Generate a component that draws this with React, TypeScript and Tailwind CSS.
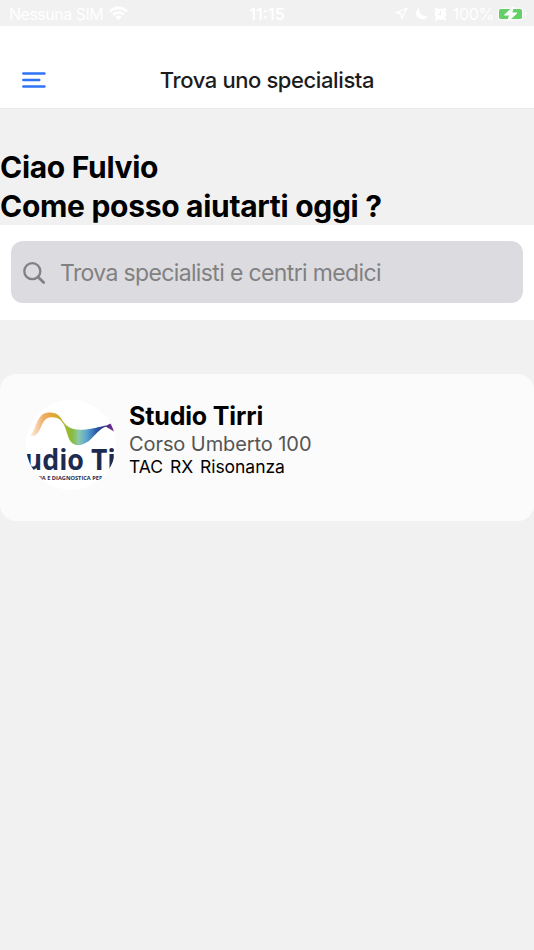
import React from 'react';

interface Clinic {
  name: string;
  address: string;
  services: string[];
}

const clinics: Clinic[] = [
  { name: 'Studio Tirri', address: 'Corso Umberto 100', services: ['TAC', 'RX', 'Risonanza'] },
];

const StatusBar: React.FC = () => (
  <div className="grid h-[26px] grid-cols-3 items-center px-[9px] pt-px text-[16px] leading-none text-white">
    <div className="flex items-center gap-[6px]">
      <span className="whitespace-nowrap tracking-[-0.5px]">Nessuna SIM</span>
      <svg width="19" height="15" viewBox="0 0 20 15" className="shrink-0" fill="none" stroke="white" strokeWidth="2.7">
        <path d="M1 5.2a13 13 0 0 1 18 0" />
        <path d="M4.4 8.8a8 8 0 0 1 11.2 0" />
        <path d="M10 14.4 6.8 11.2a4.6 4.6 0 0 1 6.4 0Z" fill="white" stroke="none" />
      </svg>
    </div>
    <span className="text-center font-semibold">11:15</span>
    <div className="flex items-center justify-end">
      <svg width="13" height="13" viewBox="0 0 13 13" className="mr-[7px] shrink-0" fill="none" stroke="white" strokeWidth="1.3" strokeLinejoin="round">
        <path d="M12 1 1 5.8l5.1.7.6 5.3Z" />
      </svg>
      <svg width="13" height="13" viewBox="0 0 13 13" className="mr-[6px] shrink-0" fill="white">
        <path d="M4.2.5A6.3 6.3 0 1 0 12.8 9C8 10.6 2.6 5.4 4.2.5Z" />
      </svg>
      <svg width="13" height="14" viewBox="0 0 13 14" className="mr-[6px] shrink-0">
        <circle cx="6.5" cy="7.3" r="5.7" fill="white" />
        <path d="M1.4 2.8 3 1.5M11.6 2.8 10 1.5M2.6 11.8l-.6.8M10.4 11.8l.6.8" stroke="white" strokeWidth="2" strokeLinecap="round" />
        <path d="M6.5 4.2v3.3H4.2" stroke="#ededed" fill="none" />
      </svg>
      <span className="mr-[3px] tracking-[-0.3px]">100%</span>
      <svg width="31" height="14" viewBox="0 0 31 14" className="-mr-[3px] shrink-0">
        <rect x=".5" y=".5" width="26" height="13" rx="3.5" fill="#f8f8f8" />
        <rect x="2" y="2" width="23" height="10" rx="1.8" fill="#65d067" />
        <path d="M28 4.8c2 .7 2 3.7 0 4.4Z" fill="white" />
        <path d="M16.5-.5 7.5 8h5L10.8 14.5 20 6h-5.2Z" fill="white" stroke="white" />
      </svg>
    </div>
  </div>
);

const Header: React.FC = () => (
  <header className="grid h-[83px] grid-cols-[1fr_auto_1fr] items-center border-b border-[#ebebec] bg-white px-[22px] pt-[25px]">
    <button type="button" aria-label="Menu">
      <svg width="24" height="18" viewBox="0 0 24 18" stroke="#2f73f6" strokeWidth="2.4" strokeLinecap="round">
        <path d="M1.3 2.5h21.2M1.3 9h16M1.3 15.5h21.2" />
      </svg>
    </button>
    <h1 className="text-[22px] font-medium leading-7 tracking-[-0.4px] text-[#1c1c1e]">Trova uno specialista</h1>
  </header>
);

const SearchBar: React.FC = () => (
  <div className="h-[95px] bg-white px-[11px] pt-4">
    <div className="flex h-[62px] items-center rounded-[12px] bg-[#dcdbe0] pl-[12px] pt-[2px] text-[#818181]">
      <svg width="22" height="22" viewBox="0 0 22 22" fill="none" stroke="currentColor" strokeWidth="2.3">
        <circle cx="9.3" cy="9.2" r="8" />
        <path d="m15 15 5.7 5.5" strokeWidth="2.7" strokeLinecap="round" />
      </svg>
      <span className="ml-[15px] text-[23px] tracking-[-0.64px]">Trova specialisti e centri medici</span>
    </div>
  </div>
);

const StudioLogo: React.FC = () => (
  <svg width="90" height="90" viewBox="0 0 90 90" className="shrink-0 rounded-full bg-white">
    <defs>
      <linearGradient id="wave" x1="6" y1="0" x2="88" y2="0" gradientUnits="userSpaceOnUse">
        <stop offset="0" stopColor="#fce8d8" />
        <stop offset="0.14" stopColor="#efae68" />
        <stop offset="0.25" stopColor="#e5a637" />
        <stop offset="0.38" stopColor="#b2b52d" />
        <stop offset="0.49" stopColor="#86bd3b" />
        <stop offset="0.57" stopColor="#8dc8ad" />
        <stop offset="0.67" stopColor="#58a4d0" />
        <stop offset="0.78" stopColor="#295bac" />
        <stop offset="0.88" stopColor="#343184" />
        <stop offset="1" stopColor="#7e2b8f" />
      </linearGradient>
      <clipPath id="bounds">
        <rect width="88" height="90" />
      </clipPath>
    </defs>
    <path
      d="M4.5 36C9 30 11 17 18 13.6C22 12 29 11.6 33 15.8C36 19 37 22 40 25C45 29.5 52 30.5 60 29.5C69 28.5 76 26 80.5 25.5L88 21.7V31.5L80 26.8C75 28 71 33 66 38C61 43.5 55 45.8 50 45C43 43 42 36 40 30C38 23.5 35 19.5 31 18C27 17 22 16.5 19 20C15 24 13.5 35.5 7 36Z"
      fill="url(#wave)"
    />
    <g fill="#1d2b51" fontFamily="Open Sans, sans-serif" fontWeight="700" clipPath="url(#bounds)">
      <text x="-1.5" y="69.8" fontSize="28.5" textLength="59.5" lengthAdjust="spacingAndGlyphs">udio</text>
      <text x="65" y="69.8" fontSize="28.5" textLength="25" lengthAdjust="spacingAndGlyphs">Ti</text>
      <text x="12.5" y="79.7" fontSize="5.8" textLength="64" lengthAdjust="spacingAndGlyphs">
        'IA E DIAGNOSTICA PEP
      </text>
    </g>
  </svg>
);

const ClinicCard: React.FC<{ clinic: Clinic }> = ({ clinic }) => (
  <article className="flex h-[147px] rounded-[16px] bg-[#fbfbfb] pl-[26px] pt-[26px]">
    <StudioLogo />
    <div className="ml-[13px]">
      <h3 className="pt-px text-[25px] font-bold leading-[31px] tracking-[-0.15px]">{clinic.name}</h3>
      <p className="text-[20px] leading-[24px] tracking-[-0.08px] text-[#555]">{clinic.address}</p>
      <ul className="flex gap-[7px] text-[17.5px] leading-[22px] tracking-[-0.05px]">
        {clinic.services.map((service) => (
          <li key={service}>{service}</li>
        ))}
      </ul>
    </div>
  </article>
);

const App: React.FC = () => (
  <div className="min-h-screen overflow-hidden bg-[#f1f1f1] font-['Inter',sans-serif] text-black">
    <StatusBar />
    <Header />
    <h2 className="h-[116px] pt-[39px] text-[30px] font-bold leading-[39px] tracking-[-0.3px]">
      Ciao Fulvio
      <br />
      Come posso aiutarti oggi ?
    </h2>
    <SearchBar />
    <main className="pt-[54px]">
      {clinics.map((clinic) => (
        <ClinicCard key={clinic.name} clinic={clinic} />
      ))}
    </main>
  </div>
);

export default App;
